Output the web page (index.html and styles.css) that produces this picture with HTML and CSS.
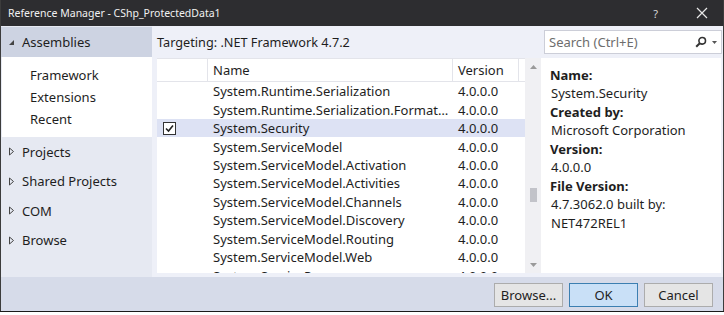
FILE: index.html
```html
<!DOCTYPE html>
<html lang="en">
<head>
    <meta charset="UTF-8">
    <meta name="viewport" content="width=device-width, initial-scale=1.0">
    <title>Reference Manager</title>
    <link rel="stylesheet" href="styles.css">
</head>
<body>
    <div class="window">
        <header class="titlebar">
            <span class="title">Reference Manager - CShp_ProtectedData1</span>
            <span class="help">?</span>
            <svg class="close" width="12" height="12" viewBox="0 0 12 12">
                <path d="M1 1 L11 11 M11 1 L1 11" stroke="#e8e8e8" stroke-width="1.2" fill="none"/>
            </svg>
        </header>

        <div class="body">
            <aside class="sidebar">
                <div class="group group-open">
                    <svg class="expander" width="7" height="7" viewBox="0 0 7 7"><path d="M6 1 L6 6 L1 6 Z" fill="#444"/></svg>
                    Assemblies
                </div>
                <ul class="subitems">
                    <li>Framework</li>
                    <li>Extensions</li>
                    <li>Recent</li>
                </ul>
                <div class="group">
                    <svg class="expander" width="7" height="9" viewBox="0 0 7 9"><path d="M1.5 1 L5.5 4.5 L1.5 8 Z" fill="none" stroke="#444"/></svg>
                    Projects
                </div>
                <div class="group">
                    <svg class="expander" width="7" height="9" viewBox="0 0 7 9"><path d="M1.5 1 L5.5 4.5 L1.5 8 Z" fill="none" stroke="#444"/></svg>
                    Shared Projects
                </div>
                <div class="group">
                    <svg class="expander" width="7" height="9" viewBox="0 0 7 9"><path d="M1.5 1 L5.5 4.5 L1.5 8 Z" fill="none" stroke="#444"/></svg>
                    COM
                </div>
                <div class="group">
                    <svg class="expander" width="7" height="9" viewBox="0 0 7 9"><path d="M1.5 1 L5.5 4.5 L1.5 8 Z" fill="none" stroke="#444"/></svg>
                    Browse
                </div>
            </aside>

            <main class="main">
                <div class="toolbar">
                    <span class="targeting">Targeting: .NET Framework 4.7.2</span>
                    <div class="search">
                        <span class="placeholder">Search (Ctrl+E)</span>
                        <svg class="search-icon" width="12" height="12" viewBox="0 0 12 12">
                            <circle cx="7.2" cy="4.8" r="3.3" fill="none" stroke="#333" stroke-width="1.6"/>
                            <path d="M4.8 7.2 L1.2 10.8" stroke="#333" stroke-width="2"/>
                        </svg>
                        <svg class="search-drop" width="5" height="3" viewBox="0 0 5 3"><path d="M0 0 L5 0 L2.5 3 Z" fill="#555"/></svg>
                    </div>
                </div>

                <div class="content">
                    <div class="list">
                        <div class="row list-header">
                            <div class="cell cell-check"></div>
                            <div class="cell cell-name">Name</div>
                            <div class="cell cell-version">Version</div>
                            <div class="cell cell-fill"></div>
                        </div>
                        <div class="rows">
                            <div class="row"><div class="cell cell-check"></div><div class="cell cell-name">System.Runtime.Serialization</div><div class="cell cell-version">4.0.0.0</div></div>
                            <div class="row"><div class="cell cell-check"></div><div class="cell cell-name">System.Runtime.Serialization.Formatters.Soap</div><div class="cell cell-version">4.0.0.0</div></div>
                            <div class="row row-selected">
                                <div class="cell cell-check">
                                    <span class="checkbox">
                                        <svg width="9" height="9" viewBox="0 0 9 9"><path d="M1 4.5 L3.5 7 L8 1.5" fill="none" stroke="#222" stroke-width="1.6"/></svg>
                                    </span>
                                </div>
                                <div class="cell cell-name">System.Security</div><div class="cell cell-version">4.0.0.0</div>
                            </div>
                            <div class="row"><div class="cell cell-check"></div><div class="cell cell-name">System.ServiceModel</div><div class="cell cell-version">4.0.0.0</div></div>
                            <div class="row"><div class="cell cell-check"></div><div class="cell cell-name">System.ServiceModel.Activation</div><div class="cell cell-version">4.0.0.0</div></div>
                            <div class="row"><div class="cell cell-check"></div><div class="cell cell-name">System.ServiceModel.Activities</div><div class="cell cell-version">4.0.0.0</div></div>
                            <div class="row"><div class="cell cell-check"></div><div class="cell cell-name">System.ServiceModel.Channels</div><div class="cell cell-version">4.0.0.0</div></div>
                            <div class="row"><div class="cell cell-check"></div><div class="cell cell-name">System.ServiceModel.Discovery</div><div class="cell cell-version">4.0.0.0</div></div>
                            <div class="row"><div class="cell cell-check"></div><div class="cell cell-name">System.ServiceModel.Routing</div><div class="cell cell-version">4.0.0.0</div></div>
                            <div class="row"><div class="cell cell-check"></div><div class="cell cell-name">System.ServiceModel.Web</div><div class="cell cell-version">4.0.0.0</div></div>
                            <div class="row"><div class="cell cell-check"></div><div class="cell cell-name">System.ServiceProcess</div><div class="cell cell-version">4.0.0.0</div></div>
                        </div>
                    </div>

                    <div class="scrollbar">
                        <div class="arrow"><svg width="7" height="4" viewBox="0 0 7 4"><path d="M0 4 L7 4 L3.5 0 Z" fill="#9a9a9a"/></svg></div>
                        <div class="track"><div class="thumb"></div></div>
                        <div class="arrow"><svg width="7" height="4" viewBox="0 0 7 4"><path d="M0 0 L7 0 L3.5 4 Z" fill="#9a9a9a"/></svg></div>
                    </div>

                    <div class="details">
                        <div class="label">Name:</div>
                        <div class="value">System.Security</div>
                        <div class="label">Created by:</div>
                        <div class="value">Microsoft Corporation</div>
                        <div class="label">Version:</div>
                        <div class="value">4.0.0.0</div>
                        <div class="label">File Version:</div>
                        <div class="value">4.7.3062.0 built by:</div>
                        <div class="value">NET472REL1</div>
                    </div>
                </div>
            </main>
        </div>

        <footer class="buttons">
            <button class="btn">Browse...</button>
            <button class="btn btn-default">OK</button>
            <button class="btn">Cancel</button>
        </footer>
    </div>
    <div class="desktop"></div>
</body>
</html>
```

FILE: styles.css
```css
body {
    margin: 0;
    padding: 0;
    font-family: "Noto Sans", "Open Sans", sans-serif;
    font-size: 13px;
    color: #1e1e1e;
    background-color: #fff;
    overflow: hidden;
}

.window {
    width: 724px;
    height: 311px;
    display: flex;
    flex-direction: column;
    background-color: #eef0f8;
    border-left: 1px solid #3c3c3c;
    border-right: 1px solid #3c3c3c;
    box-sizing: border-box;
}

.titlebar {
    height: 26px;
    background-color: #2d2d30;
    color: #f1f1f1;
    font-size: 10.5px;
    display: flex;
    align-items: center;
    padding: 0 0 0 7px;
    flex-shrink: 0;
}

.title {
    flex: 1;
}

.help {
    color: #d8d8d8;
    font-size: 11px;
    margin-right: 38px;
}

.close {
    margin-right: 15px;
}

.body {
    flex: 1;
    display: flex;
    min-height: 0;
}

/* left navigation */
.sidebar {
    width: 151px;
    background-color: #e6e9f2;
    padding-top: 1px;
    flex-shrink: 0;
}

.group {
    height: 29.5px;
    display: flex;
    align-items: center;
    padding-left: 7px;
}

.group .expander {
    margin-right: 7px;
}

.group-open {
    height: 30px;
    background-color: #cdd3e2;
}

.subitems {
    list-style: none;
    margin: 0;
    padding: 7px 0 7px 28px;
    background-color: #fff;
    margin-left: 1px;
}

.subitems li {
    height: 22px;
    line-height: 22px;
}

/* main area */
.main {
    flex: 1;
    display: flex;
    flex-direction: column;
    min-width: 0;
}

.toolbar {
    height: 32px;
    display: flex;
    align-items: center;
    justify-content: space-between;
    padding-left: 5px;
    flex-shrink: 0;
}

.targeting {
    font-size: 12.7px;
}

.search {
    width: 178px;
    height: 24px;
    box-sizing: border-box;
    background-color: #fff;
    border: 1px solid #ccced8;
    display: flex;
    align-items: center;
    padding-left: 4px;
    margin-right: 1px;
}

.placeholder {
    flex: 1;
    color: #6d6d6d;
}

.search-icon {
    margin-right: 5px;
}

.search-drop {
    margin-right: 4px;
}

.content {
    flex: 1;
    display: flex;
    min-height: 0;
    margin-bottom: 4px;
}

.list {
    width: 368px;
    margin-left: 5px;
    background-color: #fff;
    overflow: hidden;
}

.row {
    display: grid;
    grid-template-columns: 51px 245px 66px 6px;
    height: 18.44px;
    align-items: center;
}

.cell {
    padding-left: 5px;
    white-space: nowrap;
    overflow: hidden;
    text-overflow: ellipsis;
}

.cell-name {
    padding-right: 4px;
}

.list-header {
    height: 24px;
    border-top: 1px solid #e3e4ea;
    border-bottom: 1px solid #e3e4ea;
    box-sizing: border-box;
}

.list-header .cell {
    height: 22px;
    line-height: 22px;
    border-right: 1px solid #e3e4ea;
}

.list-header .cell-fill {
    border-right: none;
}

.row-selected {
    background-color: #dde2f4;
}

.checkbox {
    display: flex;
    align-items: center;
    justify-content: center;
    width: 11px;
    height: 11px;
    border: 1px solid #333;
    background-color: #fff;
    margin-left: 1px;
}

.scrollbar {
    width: 16px;
    background-color: #f0f0f3;
    display: flex;
    flex-direction: column;
    flex-shrink: 0;
}

.arrow {
    height: 17px;
    display: flex;
    align-items: center;
    justify-content: center;
}

.track {
    flex: 1;
    padding-top: 113px;
}

.thumb {
    width: 7px;
    height: 14px;
    margin-left: 5px;
    background-color: #c2c3c9;
}

.details {
    flex: 1;
    background-color: #fff;
    padding: 8px 0 0 9px;
    margin-right: 2px;
    line-height: 18.44px;
}

.label {
    font-weight: 700;
}

.value {
    padding-left: 1px;
}

/* bottom buttons */
.buttons {
    height: 34px;
    flex-shrink: 0;
    background-color: #d6dbe9;
    display: flex;
    justify-content: flex-end;
    align-items: flex-start;
    gap: 6px;
    padding: 6px 10px 0 0;
    box-sizing: border-box;
}

.btn {
    width: 69px;
    height: 24px;
    font-family: "Noto Sans", "Open Sans", sans-serif;
    font-size: 13px;
    color: #1e1e1e;
    background-color: #e5e5e5;
    border: 1px solid #acacac;
    padding: 0;
}

.btn-default {
    background-color: #c9e0f7;
    border-color: #3c7fb1;
}

.desktop {
    height: 4px;
    border-top: 1px solid #1a1a1a;
    background-color: #fff;
}
```
